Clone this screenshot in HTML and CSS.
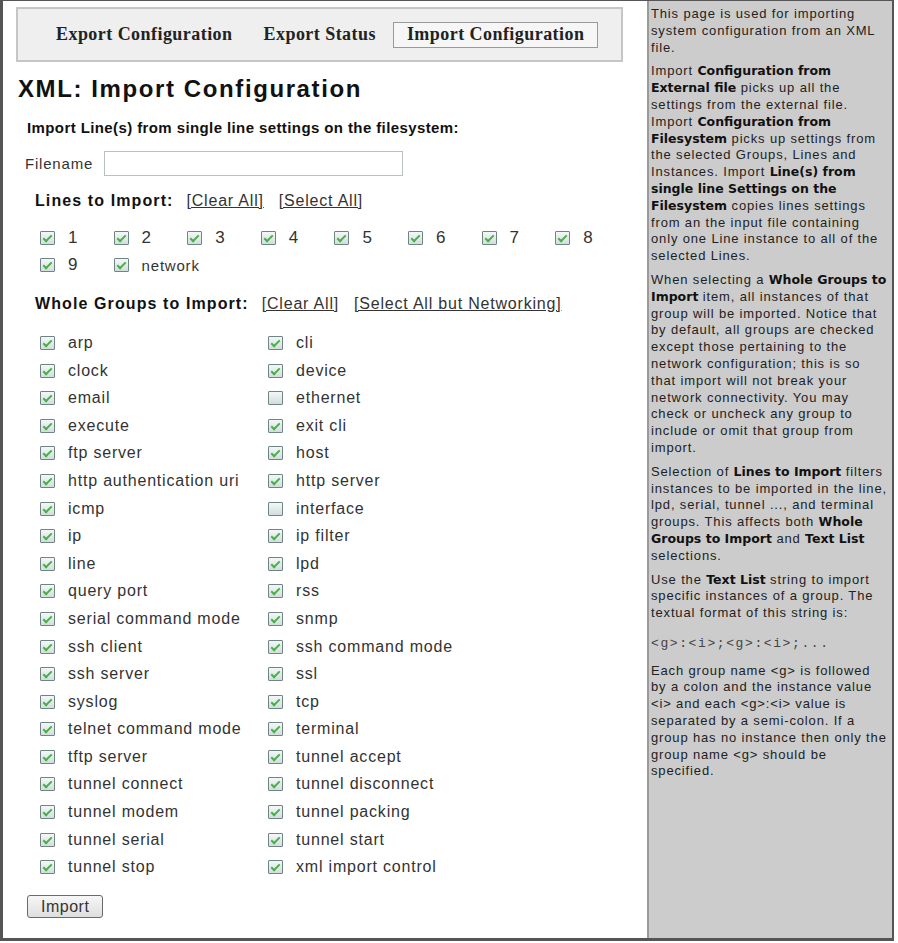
FILE: index.html
```html
<!DOCTYPE html>
<html lang="en">
<head>
    <meta charset="UTF-8">
    <title>XML: Import Configuration</title>
    <link rel="stylesheet" href="styles.css">
</head>
<body>

<div class="frame">
    <div class="main">
        <div class="tabs">
            <a class="tab">Export Configuration</a>
            <a class="tab">Export Status</a>
            <a class="tab active">Import Configuration</a>
        </div>

        <h1>XML: Import Configuration</h1>
        <h2>Import Line(s) from single line settings on the filesystem:</h2>

        <div class="file-row">
            <label for="filename">Filename</label>
            <input type="text" id="filename">
        </div>

        <div class="section-head">
            <span class="title">Lines to Import:</span>
            <a class="link">[Clear All]</a>
            <a class="link">[Select All]</a>
        </div>
        <div class="lines">
            <label class="opt"><input type="checkbox" checked><i class="box"></i>1</label>
            <label class="opt"><input type="checkbox" checked><i class="box"></i>2</label>
            <label class="opt"><input type="checkbox" checked><i class="box"></i>3</label>
            <label class="opt"><input type="checkbox" checked><i class="box"></i>4</label>
            <label class="opt"><input type="checkbox" checked><i class="box"></i>5</label>
            <label class="opt"><input type="checkbox" checked><i class="box"></i>6</label>
            <label class="opt"><input type="checkbox" checked><i class="box"></i>7</label>
            <label class="opt"><input type="checkbox" checked><i class="box"></i>8</label>
            <label class="opt"><input type="checkbox" checked><i class="box"></i>9</label>
            <label class="opt small"><input type="checkbox" checked><i class="box"></i>network</label>
        </div>

        <div class="section-head">
            <span class="title">Whole Groups to Import:</span>
            <a class="link">[Clear All]</a>
            <a class="link">[Select All but Networking]</a>
        </div>
        <div class="groups">
            <label class="opt"><input type="checkbox" checked><i class="box"></i>arp</label>
            <label class="opt"><input type="checkbox" checked><i class="box"></i>clock</label>
            <label class="opt"><input type="checkbox" checked><i class="box"></i>email</label>
            <label class="opt"><input type="checkbox" checked><i class="box"></i>execute</label>
            <label class="opt"><input type="checkbox" checked><i class="box"></i>ftp server</label>
            <label class="opt"><input type="checkbox" checked><i class="box"></i>http authentication uri</label>
            <label class="opt"><input type="checkbox" checked><i class="box"></i>icmp</label>
            <label class="opt"><input type="checkbox" checked><i class="box"></i>ip</label>
            <label class="opt"><input type="checkbox" checked><i class="box"></i>line</label>
            <label class="opt"><input type="checkbox" checked><i class="box"></i>query port</label>
            <label class="opt"><input type="checkbox" checked><i class="box"></i>serial command mode</label>
            <label class="opt"><input type="checkbox" checked><i class="box"></i>ssh client</label>
            <label class="opt"><input type="checkbox" checked><i class="box"></i>ssh server</label>
            <label class="opt"><input type="checkbox" checked><i class="box"></i>syslog</label>
            <label class="opt"><input type="checkbox" checked><i class="box"></i>telnet command mode</label>
            <label class="opt"><input type="checkbox" checked><i class="box"></i>tftp server</label>
            <label class="opt"><input type="checkbox" checked><i class="box"></i>tunnel connect</label>
            <label class="opt"><input type="checkbox" checked><i class="box"></i>tunnel modem</label>
            <label class="opt"><input type="checkbox" checked><i class="box"></i>tunnel serial</label>
            <label class="opt"><input type="checkbox" checked><i class="box"></i>tunnel stop</label>

            <label class="opt"><input type="checkbox" checked><i class="box"></i>cli</label>
            <label class="opt"><input type="checkbox" checked><i class="box"></i>device</label>
            <label class="opt"><input type="checkbox"><i class="box"></i>ethernet</label>
            <label class="opt"><input type="checkbox" checked><i class="box"></i>exit cli</label>
            <label class="opt"><input type="checkbox" checked><i class="box"></i>host</label>
            <label class="opt"><input type="checkbox" checked><i class="box"></i>http server</label>
            <label class="opt"><input type="checkbox"><i class="box"></i>interface</label>
            <label class="opt"><input type="checkbox" checked><i class="box"></i>ip filter</label>
            <label class="opt"><input type="checkbox" checked><i class="box"></i>lpd</label>
            <label class="opt"><input type="checkbox" checked><i class="box"></i>rss</label>
            <label class="opt"><input type="checkbox" checked><i class="box"></i>snmp</label>
            <label class="opt"><input type="checkbox" checked><i class="box"></i>ssh command mode</label>
            <label class="opt"><input type="checkbox" checked><i class="box"></i>ssl</label>
            <label class="opt"><input type="checkbox" checked><i class="box"></i>tcp</label>
            <label class="opt"><input type="checkbox" checked><i class="box"></i>terminal</label>
            <label class="opt"><input type="checkbox" checked><i class="box"></i>tunnel accept</label>
            <label class="opt"><input type="checkbox" checked><i class="box"></i>tunnel disconnect</label>
            <label class="opt"><input type="checkbox" checked><i class="box"></i>tunnel packing</label>
            <label class="opt"><input type="checkbox" checked><i class="box"></i>tunnel start</label>
            <label class="opt"><input type="checkbox" checked><i class="box"></i>xml import control</label>
        </div>

        <button type="button" class="btn">Import</button>
    </div>

    <div class="help">
        <p>This page is used for importing system configuration from an XML file.</p>
        <p>Import <b>Configuration from External file</b> picks up all the settings from the external file.<br>
        Import <b>Configuration from Filesystem</b> picks up settings from the selected Groups, Lines and Instances. Import <b>Line(s) from single line Settings on the Filesystem</b> copies lines settings from an the input file containing only one Line instance to all of the selected Lines.</p>
        <p>When selecting a <b>Whole Groups to Import</b> item, all instances of that group will be imported. Notice that by default, all groups are checked except those pertaining to the network configuration; this is so that import will not break your network connectivity. You may check or uncheck any group to include or omit that group from import.</p>
        <p>Selection of <b>Lines to Import</b> filters instances to be imported in the line, lpd, serial, tunnel ..., and terminal groups. This affects both <b>Whole Groups to Import</b> and <b>Text List</b> selections.</p>
        <p>Use the <b>Text List</b> string to import specific instances of a group. The textual format of this string is:</p>
        <p class="code">&lt;g&gt;:&lt;i&gt;;&lt;g&gt;:&lt;i&gt;;...</p>
        <p>Each group name &lt;g&gt; is followed by a colon and the instance value &lt;i&gt; and each &lt;g&gt;:&lt;i&gt; value is separated by a semi-colon. If a group has no instance then only the group name &lt;g&gt; should be specified.</p>
    </div>
</div>

</body>
</html>
```

FILE: styles.css
```css
body {
    margin: 0;
    font-family: "Liberation Sans", Arial, sans-serif;
    color: #222;
    background: #fff;
}
.frame {
    display: flex;
    width: 889px;
    height: 937px;
    border: solid #555;
    border-width: 1px 2px 3px 3px;
}
.main {
    width: 644px;
    flex-shrink: 0;
    padding: 6px 24px 0 13px;
    box-sizing: border-box;
}

/* tab bar */
.tabs {
    display: flex;
    align-items: center;
    gap: 3px;
    height: 55px;
    padding-left: 24px;
    border: 2px solid #c6c6c6;
    background: #efefef;
    box-sizing: border-box;
}
.tab {
    padding: 1px 13px 2px;
    border: 1px solid transparent;
    font-family: "Liberation Serif", "Times New Roman", serif;
    font-weight: bold;
    font-size: 18px;
    letter-spacing: 0.45px;
    color: #222;
}
.tab.active {
    border-color: #9a9a9a;
    background: #f6f6f6;
}

h1 {
    margin: 15px 0 0 2px;
    font-size: 24px;
    line-height: 24px;
    letter-spacing: 1.6px;
    color: #111;
}
h2 {
    margin: 17px 0 0 11px;
    font-size: 15px;
    line-height: 20px;
    letter-spacing: 0.4px;
    color: #111;
}

.file-row {
    display: flex;
    align-items: center;
    gap: 11px;
    margin: 13px 0 0 9px;
    font-size: 15px;
    letter-spacing: 0.8px;
    color: #333;
}
.file-row input {
    width: 299px;
    height: 25px;
    box-sizing: border-box;
    border: 1px solid #b8c0c0;
    background: #fff;
}

.section-head {
    display: flex;
    align-items: center;
    height: 22px;
    margin: 14px 0 0 19px;
    font-size: 16px;
    letter-spacing: 0.8px;
}
.section-head .title {
    font-weight: bold;
    letter-spacing: 1.1px;
    color: #111;
    margin-right: 13px;
}
.link {
    color: #333;
    text-decoration: underline;
    margin-right: 15px;
}

.lines {
    display: grid;
    grid-template-columns: repeat(8, 73.6px);
    grid-auto-rows: 27.6px;
    margin: 12px 0 0 24px;
}
.groups {
    display: grid;
    grid-template-columns: 228px 228px;
    grid-template-rows: repeat(20, 27.6px);
    grid-auto-flow: column;
    margin: 14px 0 0 24px;
}

.opt {
    display: flex;
    align-items: center;
    gap: 13px;
    font-size: 16px;
    letter-spacing: 0.8px;
    color: #333;
    white-space: nowrap;
}
.lines .opt {
    font-size: 17px;
}
.lines .opt.small {
    font-size: 15px;
}
.opt input {
    display: none;
}
.box {
    position: relative;
    width: 15px;
    height: 14px;
    box-sizing: border-box;
    border: 1px solid #6f8585;
    border-radius: 1px;
    background: linear-gradient(#f4f7f7, #d3dddd);
    flex-shrink: 0;
}
.opt input:checked + .box::after {
    content: '';
    position: absolute;
    left: 4px;
    top: 1px;
    width: 3px;
    height: 7px;
    border: solid #48b048;
    border-width: 0 2px 2px 0;
    transform: rotate(45deg);
}

.btn {
    margin: 14px 0 0 11px;
    padding: 0 13px;
    height: 23px;
    font-family: "Liberation Sans", Arial, sans-serif;
    font-size: 16px;
    letter-spacing: 0.5px;
    color: #333;
    border: 1px solid #6a6a6a;
    border-radius: 3px;
    background: linear-gradient(#f7f7f7, #dedede);
}

/* help column */
.help {
    flex: 1;
    border-left: 2px solid #9a9a9a;
    background: #cccccc;
    padding: 5px 3px 0 2px;
    font-size: 13px;
    line-height: 16.8px;
    letter-spacing: 0.85px;
    color: #222;
}
.help p {
    margin: 0 0 7px;
}
.help b {
    font-family: "DejaVu Sans", Verdana, sans-serif;
    font-size: 12.5px;
    line-height: 1;
    letter-spacing: 0;
    color: #111;
}
.help .code {
    margin: 14px 0 10px;
    font-family: "Liberation Mono", "Courier New", monospace;
    font-size: 13px;
    letter-spacing: 1.6px;
    color: #444;
}
```
